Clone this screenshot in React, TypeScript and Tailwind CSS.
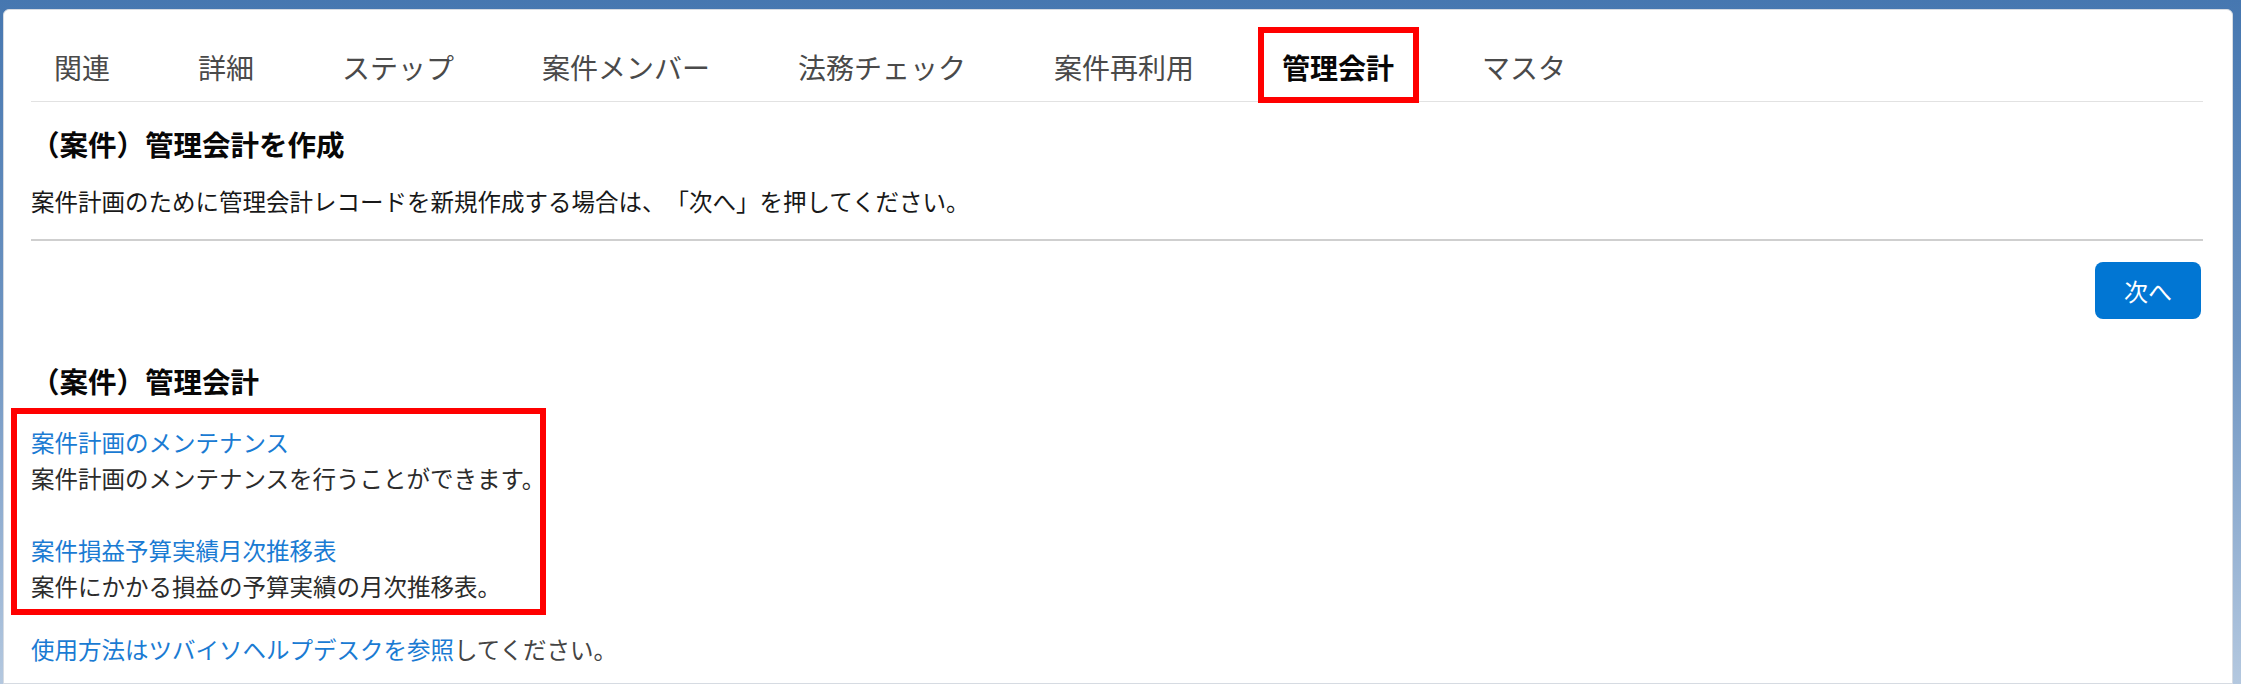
const tabs = [
  "関連",
  "詳細",
  "ステップ",
  "案件メンバー",
  "法務チェック",
  "案件再利用",
  "管理会計",
  "マスタ",
];

const activeTab = "管理会計";

const tools = [
  {
    title: "案件計画のメンテナンス",
    description: "案件計画のメンテナンスを行うことができます。",
  },
  {
    title: "案件損益予算実績月次推移表",
    description: "案件にかかる損益の予算実績の月次推移表。",
  },
];

function Annotation({ className }: { className: string }) {
  return (
    <span
      className={`pointer-events-none absolute border-[6px] border-[#ff0000] ${className}`}
    />
  );
}

export default function App() {
  return (
    <div
      className="h-[684px] overflow-hidden bg-gradient-to-b from-[#4677b0] via-[#6f95c2] to-[#b4c8df] pl-[3px] pr-[8px] pt-[9px] text-[#181818] [text-spacing-trim:space-all]"
      style={{ fontFamily: '"Noto Sans CJK JP", "Noto Sans", sans-serif' }}
    >
      <div className="h-full rounded-t-[6px] border border-[#d6dbe2] bg-white pl-[27px] pr-[29px]">
        <nav className="flex h-[92px] items-center gap-[88px] border-b border-[#e2e2e2] pl-[23px] pt-[22px]">
          {tabs.map((tab) => {
            const active = tab === activeTab;
            return (
              <span
                key={tab}
                className={`relative whitespace-nowrap text-[28px] leading-[34px] ${
                  active ? "font-bold text-[#080707]" : "text-[#4a4a4a]"
                }`}
              >
                {tab}
                {active && (
                  <Annotation className="-bottom-[19px] -left-[24px] -right-[25px] -top-[23px]" />
                )}
              </span>
            );
          })}
        </nav>

        <h2 className="mt-[22px] text-[28.5px] font-bold leading-[40px] text-[#080707]">
          （案件）管理会計を作成
        </h2>
        <p className="mt-[19px] text-[23.5px] leading-[36px]">
          案件計画のために管理会計レコードを新規作成する場合は、「次へ」を押してください。
        </p>
        <div className="mt-[20px] h-[2px] bg-[#cfcfcf]" />

        <div className="mt-[21px] flex justify-end pr-[2px]">
          <button
            type="button"
            className="h-[57px] w-[106px] rounded-[8px] bg-[#0176d3] text-[24px] text-white"
          >
            次へ
          </button>
        </div>

        <h2 className="mt-[42px] text-[28.5px] font-bold leading-[40px] text-[#080707]">
          （案件）管理会計
        </h2>

        <div className="relative mt-[23px] w-[515px]">
          {tools.map((tool, index) => (
            <div key={tool.title} className={index > 0 ? "mt-[36px]" : ""}>
              <a className="block text-[23.5px] leading-[36px] text-[#1a7bd3]">
                {tool.title}
              </a>
              <p className="whitespace-nowrap text-[23.5px] leading-[36px] text-[#2b2b2b]">
                {tool.description}
              </p>
            </div>
          ))}
          <Annotation className="-bottom-[11px] -left-[20px] -top-[16px] right-0" />
        </div>

        <p className="mt-[27px] text-[23.5px] leading-[36px] text-[#444444]">
          <a className="text-[#1a7bd3]">使用方法はツバイソヘルプデスクを参照</a>
          してください。
        </p>
      </div>
    </div>
  );
}
